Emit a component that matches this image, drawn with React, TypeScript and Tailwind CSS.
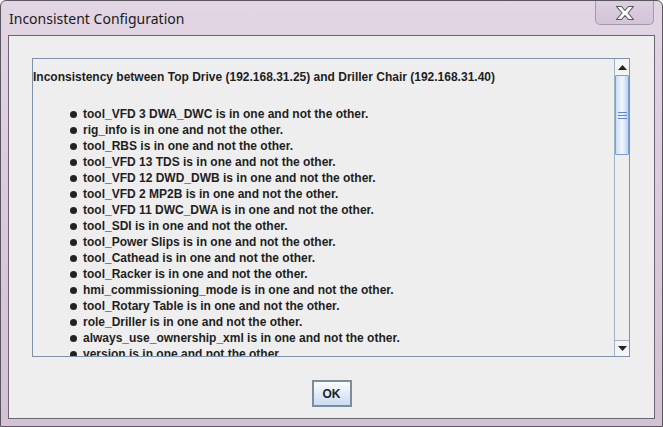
import React from "react";

const items = [
  "tool_VFD 3 DWA_DWC is in one and not the other.",
  "rig_info is in one and not the other.",
  "tool_RBS is in one and not the other.",
  "tool_VFD 13 TDS is in one and not the other.",
  "tool_VFD 12 DWD_DWB is in one and not the other.",
  "tool_VFD 2 MP2B is in one and not the other.",
  "tool_VFD 11 DWC_DWA is in one and not the other.",
  "tool_SDI is in one and not the other.",
  "tool_Power Slips is in one and not the other.",
  "tool_Cathead is in one and not the other.",
  "tool_Racker is in one and not the other.",
  "hmi_commissioning_mode is in one and not the other.",
  "tool_Rotary Table is in one and not the other.",
  "role_Driller is in one and not the other.",
  "always_use_ownership_xml is in one and not the other.",
  "version is in one and not the other.",
];

function CloseButton() {
  return (
    <div className="absolute right-[8px] top-0 flex h-[24px] w-[59px] items-center justify-center rounded-b-[5px] border border-t-0 border-[#a898ab] bg-gradient-to-b from-[#dccfdf] to-[#d3c4d7]">
      <svg width="22" height="16" viewBox="0 0 22 16">
        <path
          d="M2.5 1.5h5L11 5.5l3.5-4h5l-5.5 6.5 5.5 6.5h-5L11 10.5l-3.5 4h-5L8 8z"
          fill="#ffffff"
          stroke="#55555f"
          strokeWidth="1.1"
          strokeLinejoin="round"
        />
      </svg>
    </div>
  );
}

function ScrollBar() {
  return (
    <div className="flex w-[15px] flex-col border-l border-[#9fb3c9] bg-[#eeeeee]">
      <div className="flex h-[16px] items-center justify-center bg-[#f4f4f4]">
        <svg width="9" height="5" viewBox="0 0 9 5">
          <path d="M4.5 0L9 5H0z" fill="#222" />
        </svg>
      </div>
      <div className="relative flex h-[80px] items-center justify-center rounded-[1px] border border-[#7a9fd6] bg-gradient-to-r from-[#c9dcf6] via-[#f4f8fe] to-[#bcd2f0]">
        <div className="flex flex-col gap-[2px]">
          <div className="h-[1px] w-[9px] bg-[#5f88cf]" />
          <div className="h-[1px] w-[9px] bg-[#5f88cf]" />
          <div className="h-[1px] w-[9px] bg-[#5f88cf]" />
        </div>
      </div>
      <div className="flex-1" />
      <div className="flex h-[16px] items-center justify-center border-t border-[#9fb3c9] bg-[#f4f4f4]">
        <svg width="9" height="5" viewBox="0 0 9 5">
          <path d="M0 0h9L4.5 5z" fill="#222" />
        </svg>
      </div>
    </div>
  );
}

export default function App() {
  return (
    <div className="relative h-[427px] w-[663px] overflow-hidden rounded-t-[6px] border border-[#5b5560] bg-gradient-to-b from-[#e2d6e4] via-[#d9cadc] to-[#d3c1d6]">
      {/* Title bar */}
      <div className="flex h-[34px] items-center pl-[8px] pt-[1px] text-[14px] text-[#1a1a1a]" style={{ fontFamily: '"Noto Sans", "Open Sans", sans-serif' }}>
        Inconsistent Configuration
      </div>
      <CloseButton />

      {/* Content */}
      <div className="mx-[7px] flex h-[384px] flex-col border border-[#6c6470] bg-[#eeeeee]">
        <div className="ml-[23px] mr-[24px] mt-[22px] flex h-[299px] border border-[#7f93a8] bg-[#eeeeee]">
          <div className="flex-1 overflow-hidden text-[12px] text-[#1e1e1e]" style={{ fontFamily: '"Liberation Sans", Arial, sans-serif' }}>
            <div className="pt-[10px] font-bold leading-[16px]">
              Inconsistency between Top Drive (192.168.31.25) and Driller Chair (192.168.31.40)
            </div>
            <ul className="mt-[21px] pl-[37px] font-bold">
              {items.map((t) => (
                <li key={t} className="flex h-[16px] items-center">
                  <span className="mr-[6px] h-[7px] w-[7px] rounded-full bg-[#222]" />
                  <span className="leading-[16px]">{t}</span>
                </li>
              ))}
            </ul>
          </div>
          <ScrollBar />
        </div>
        <div className="flex flex-1 items-start justify-center pt-[23px]">
          <button
            className="flex h-[27px] w-[40px] items-center justify-center border-2 border-[#7b8c9d] bg-gradient-to-b from-[#fbfcfe] to-[#c9dcf2] text-[12px] font-bold text-[#1e1e1e]"
            style={{ fontFamily: '"Liberation Sans", Arial, sans-serif' }}
          >
            OK
          </button>
        </div>
      </div>
    </div>
  );
}
